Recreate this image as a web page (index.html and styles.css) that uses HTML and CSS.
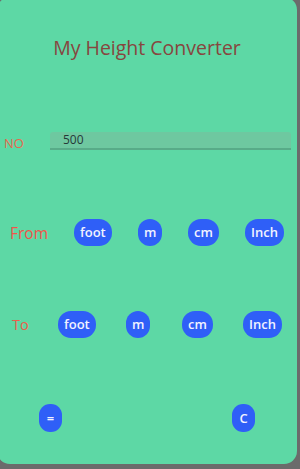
FILE: index.html
```html
<!DOCTYPE html>
<html>
<head>
<meta charset="utf-8">
<link rel="stylesheet" href="styles.css">
</head>
<body>
<div class="card">
  <div class="title">My Height Converter</div>
  <div class="row row-no">
    <span class="label label-no">NO</span>
    <div class="input">500</div>
  </div>
  <div class="row row-from">
    <span class="label">From</span>
    <span class="btn">foot</span>
    <span class="btn">m</span>
    <span class="btn">cm</span>
    <span class="btn">Inch</span>
  </div>
  <div class="row row-to">
    <span class="label">To</span>
    <span class="btn">foot</span>
    <span class="btn">m</span>
    <span class="btn">cm</span>
    <span class="btn">Inch</span>
  </div>
  <div class="row row-actions">
    <span class="btn btn-sq">=</span>
    <span class="btn btn-sq">C</span>
  </div>
</div>
</body>
</html>
```
FILE: styles.css
```css
html, body {
  margin: 0;
  padding: 0;
  background: #6b6b6b;
  overflow: hidden;
}
body {
  width: 300px;
  height: 469px;
  font-family: "Open Sans", "Noto Sans", sans-serif;
}
.card {
  margin: -3px 0 0 -3px;
  width: 300px;
  height: 467px;
  box-sizing: border-box;
  padding: 39px 0 0 3px;
  background: #5dd8a5;
  border-radius: 13px;
}
.title {
  height: 24px;
  line-height: 24px;
  font-size: 19.5px;
  text-align: center;
  color: #87463f;
  padding-right: 3px;
}
.row {
  display: grid;
  align-items: center;
  justify-items: start;
}
.label {
  font-size: 15.5px;
  color: #f2544a;
}
.row-no {
  margin-top: 70px;
  height: 18px;
  padding-left: 4px;
  grid-template-columns: 46px 241px;
}
.label-no {
  font-size: 13px;
  color: #e6684f;
  margin-top: 4px;
}
.input {
  width: 241px;
  height: 18px;
  box-sizing: border-box;
  background: #6ec8a0;
  border-bottom: 2px solid #58ab88;
  border-radius: 3px 3px 0 0;
  padding-left: 13px;
  font-size: 12px;
  line-height: 16px;
  color: #263838;
}
.row-from {
  margin-top: 71px;
  height: 27px;
  padding-left: 10px;
  grid-template-columns: 64px 64px 50px 57px auto;
}
.row-to {
  margin-top: 65px;
  height: 27px;
  padding-left: 12px;
  grid-template-columns: 46px 68px 56px 61px auto;
}
.row-to .label {
  font-size: 14.5px;
  color: #ec5f4a;
}
.btn {
  height: 27px;
  line-height: 27px;
  box-sizing: border-box;
  padding: 0 6px;
  min-width: 24px;
  text-align: center;
  background: #2f5ff7;
  color: #f2f2ff;
  font-size: 13px;
  font-weight: 600;
  border-radius: 13px;
}
.row-actions {
  margin-top: 66px;
  height: 28px;
  padding-left: 39px;
  grid-template-columns: 193px auto;
}
.btn-sq {
  width: 23px;
  min-width: 0;
  height: 28px;
  line-height: 28px;
  padding: 0;
  border-radius: 11px;
}
```
